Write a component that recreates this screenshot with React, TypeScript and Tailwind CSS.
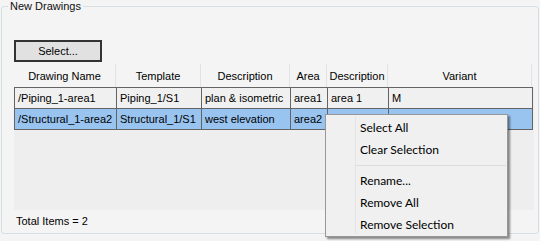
import React from 'react';

type Row = { name: string; template: string; desc: string; area: string; areaDesc: string; variant: string };

const rows: Row[] = [
  { name: '/Piping_1-area1', template: 'Piping_1/S1', desc: 'plan & isometric', area: 'area1', areaDesc: 'area 1', variant: 'M' },
  { name: '/Structural_1-area2', template: 'Structural_1/S1', desc: 'west elevation', area: 'area2', areaDesc: 'area 2', variant: 'M' },
];

const headers = ['Drawing Name', 'Template', 'Description', 'Area', 'Description', 'Variant'];
const cols = 'grid-cols-[102px_85px_89px_37px_61px_144px]';

const MenuItem = ({ label }: { label: string }) => (
  <div className="h-[22px] flex items-center pl-[34px] text-[12px] text-black">{label}</div>
);

const App = () => {
  return (
    <div className="relative w-[540px] h-[241px] bg-[#f4f4f4] overflow-hidden font-['Liberation_Sans',sans-serif] text-[11px] text-black">
      {/* group box */}
      <div className="absolute left-[1px] top-[6px] w-[538px] h-[228px] border border-[#d5dfe5] rounded-[3px]" />
      <div className="absolute left-[8px] top-0 px-[2px] bg-[#f4f4f4] leading-[13px] text-[#111]">New Drawings</div>

      <div className="relative pt-[40px] pl-[14px] flex flex-col">
        <button className="w-[88px] h-[22px] bg-[#e1e1e1] border-2 border-[#333] flex items-center justify-center leading-none">
          Select...
        </button>

        <div className="mt-[2px] w-[520px] h-[146px] bg-[#eeeeee]">
          <div className={`grid ${cols} h-[23px] bg-[#f4f4f4]`}>
            {headers.map((h, i) => (
              <div key={i} className="flex items-center justify-center border-r border-[#e2e2e2] pt-[1px]">{h}</div>
            ))}
          </div>
          <div className="w-[519px] border-l border-t border-[#646464]">
            {rows.map((r, i) => (
              <div
                key={i}
                className={`grid ${cols} h-[21px] border-b border-[#646464] ${i === 1 ? 'bg-[#99c4f0]' : 'bg-[#f0f0f0]'}`}
              >
                {[r.name, r.template, r.desc, r.area, r.areaDesc, r.variant].map((c, j) => (
                  <div key={j} className="flex items-center pl-[3px] border-r border-[#646464] whitespace-nowrap overflow-hidden">{c}</div>
                ))}
              </div>
            ))}
          </div>
        </div>

        <div className="pl-[2px] mt-[5px] leading-[13px]">Total Items = 2</div>
      </div>

      {/* context menu */}
      <div className="absolute left-[325px] top-[114px] w-[183px] h-[123px] bg-[#f0f0f0] border border-[#979797] shadow-[2px_2px_2px_rgba(0,0,0,0.45)] py-[2px] font-['Lato',sans-serif]">
        <div className="absolute left-[29px] top-[2px] bottom-[2px] w-px bg-[#e3e3e3]" />
        <div className="relative">
          <MenuItem label="Select All" />
          <MenuItem label="Clear Selection" />
          <div className="h-[9px] flex items-center pl-[30px] pr-[1px]">
            <div className="h-px w-full bg-[#dcdcdc]" />
          </div>
          <MenuItem label="Rename..." />
          <MenuItem label="Remove All" />
          <MenuItem label="Remove Selection" />
        </div>
      </div>
    </div>
  );
};

export default App;
